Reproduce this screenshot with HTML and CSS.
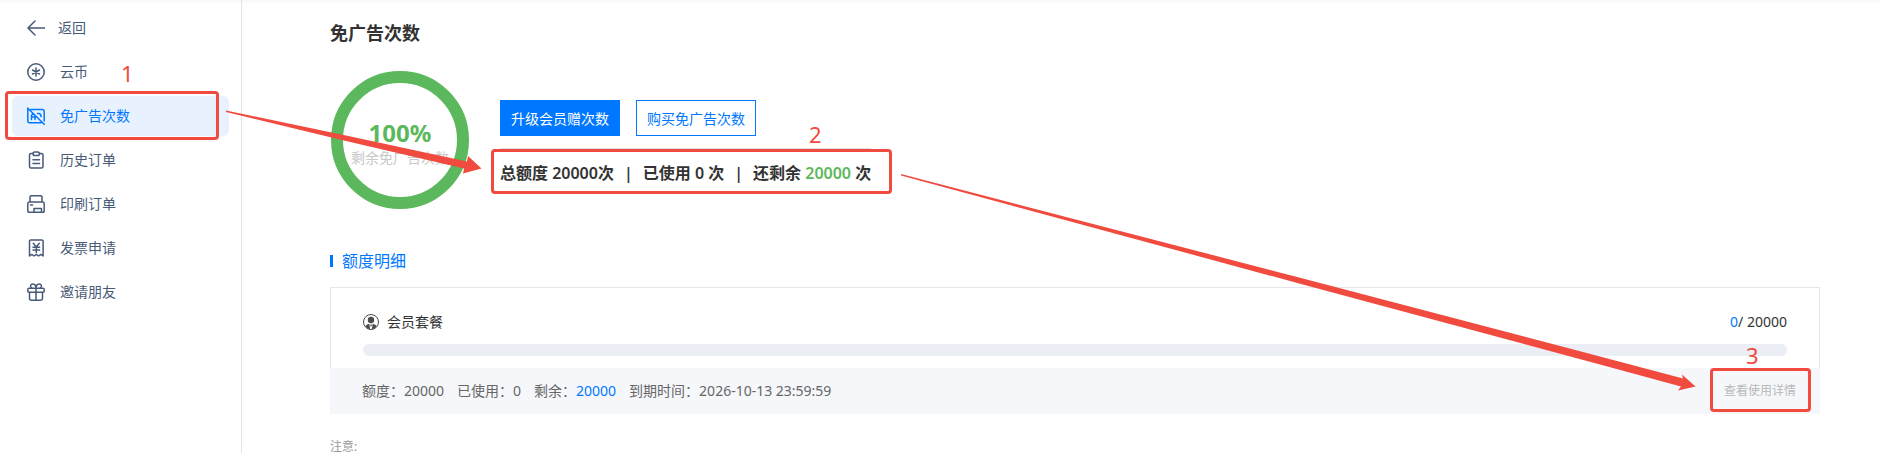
FILE: index.html
```html
<!DOCTYPE html>
<html lang="zh-CN">
<head>
  <meta charset="UTF-8">
  <meta name="viewport" content="width=device-width, initial-scale=1.0">
  <title>免广告次数</title>
  <link rel="stylesheet" href="styles.css">
</head>
<body>
  <div class="layout">
    <!-- 侧边导航 -->
    <nav class="sidebar">
      <a class="nav-item back" href="#">
        <svg class="icon" viewBox="0 0 18 18"><path d="M18 9H1M8 2L1 9l7 7"/></svg>
        返回
      </a>
      <a class="nav-item" href="#">
        <svg class="icon" viewBox="0 0 18 18"><circle cx="9" cy="9" r="8.2"/><path d="M9 5v8M5.500 7l7 4M12.500 7l-7 4"/></svg>
        云币
        <span class="mark mark-1">1</span>
      </a>
      <a class="nav-item active" href="#">
        <svg class="icon" viewBox="0 0 18 18"><path d="M4 2.500h11.500a1.700 1.700 0 0 1 1.700 1.700V14M14 15.800H2.500A1.700 1.700 0 0 1 .8 14V2M.5 1l17 16.500M4.500 12.500V8.500l1.500-2M4.500 10h3M8 9v3.500M10.500 6.500h1.200a2.500 2.500 0 0 1 2.300 3"/></svg>
        免广告次数
        <span class="frame frame-nav"></span>
      </a>
      <a class="nav-item" href="#">
        <svg class="icon" viewBox="0 0 18 18"><path d="M6 2.500H4A1.500 1.500 0 0 0 2.500 4v11.500A1.500 1.500 0 0 0 4 17h10.500a1.500 1.500 0 0 0 1.500-1.500V4a1.500 1.500 0 0 0-1.500-1.500h-2M6 8.700h6.500M6 12.500h6.500"/><rect x="6" y="1" width="6.500" height="3.600" rx="1.800"/></svg>
        历史订单
      </a>
      <a class="nav-item" href="#">
        <svg class="icon" viewBox="0 0 18 18"><path d="M3 7V2a1.200 1.200 0 0 1 1.200-1.200h9.600A1.200 1.200 0 0 1 15 2v5M7 17.200H2A1.200 1.200 0 0 1 .8 16V8.500A1.500 1.500 0 0 1 2.300 7h13.400a1.500 1.500 0 0 1 1.500 1.500V16a1.200 1.200 0 0 1-1.200 1.200H7v-3.800h7.500v3.800M3.500 10h2"/></svg>
        印刷订单
      </a>
      <a class="nav-item" href="#">
        <svg class="icon" viewBox="0 0 18 18"><path d="M2.500 17V2.200A1.300 1.300 0 0 1 3.800.9h11a1.300 1.300 0 0 1 1.300 1.300V17l-2.300-1.600-2.200 1.600-2.300-1.600L7 17l-2.200-1.600zM6.300 4.300l3 3.700 3-3.700M9.300 8v5.500M6 8.300h6.600M6 10.900h6.600"/></svg>
        发票申请
      </a>
      <a class="nav-item" href="#">
        <svg class="icon" viewBox="0 0 18 18"><path d="M2.500 9.500v6a1.700 1.700 0 0 0 1.700 1.700h9.600a1.700 1.700 0 0 0 1.700-1.700v-6M9 5.500v11.500"/><rect x=".8" y="5.300" width="16.400" height="3.900" rx="1.300"/><path d="M4.500 5C2.500 3 4 .8 5.800.9 8 1 9 3 9 5.200 9 3 10 1 12.200.9c1.800-.1 3.300 2.100 1.300 4.100"/></svg>
        邀请朋友
      </a>
    </nav>

    <main class="content">
      <h1>免广告次数</h1>

      <section class="overview">
        <div class="ring">
          <strong>100%</strong>
          <span>剩余免广告次数</span>
        </div>
        <div class="summary">
          <div class="actions">
            <button type="button" class="btn btn-primary">升级会员赠次数</button>
            <button type="button" class="btn">购买免广告次数</button>
          </div>
          <div class="stats">
            <span>总额度 20000次</span>
            <span>|</span>
            <span>已使用 0 次</span>
            <span>|</span>
            <span>还剩余 <em>20000</em> 次</span>
            <span class="frame frame-stats"></span>
            <span class="mark mark-2">2</span>
          </div>
        </div>
      </section>

      <h2>额度明细</h2>

      <section class="card">
        <div class="card-body">
          <div class="card-head">
            <svg class="user-icon" viewBox="0 0 16 16">
              <circle cx="8" cy="8" r="7.500" fill="none" stroke="#4a4a4a"/>
              <circle cx="8" cy="6" r="3.200" fill="#4a4a4a"/>
              <path d="M2.300 12.300Q3.800 10 6.300 9.800L7.200 15.400Q4.200 15 2.300 12.300zM13.700 12.300Q12.200 10 9.700 9.800L8.800 15.400Q11.800 15 13.700 12.300zM7.200 10.500h1.600l-.3 2h-1z" fill="#4a4a4a"/>
            </svg>
            <label for="usage">会员套餐</label>
            <span class="count"><em>0</em>/ 20000</span>
          </div>
          <progress id="usage" value="0" max="20000"></progress>
        </div>
        <div class="card-foot">
          <span>额度：20000</span>
          <span>已使用：0</span>
          <span>剩余：<em>20000</em></span>
          <span>到期时间：2026-10-13 23:59:59</span>
          <a class="detail-link" href="#">
            查看使用详情
            <span class="frame frame-detail"></span>
            <span class="mark mark-3">3</span>
          </a>
        </div>
      </section>

      <p class="note">注意:</p>
    </main>

    <!-- 步骤箭头 -->
    <svg class="arrow arrow-1" viewBox="0 0 256 64" preserveAspectRatio="none">
      <path d="M0 .5V2L120 31 238 58.500 237 63.500 255.500 58.500 242 46 241 51.500 120 25.500z"/>
    </svg>
    <svg class="arrow arrow-2" viewBox="0 0 795 218" preserveAspectRatio="none">
      <path d="M0 0V1.500L400 110 699 190.500 780 212.500 777 216.500 794.500 212.500 781 200.500 782 204.500 699 182.500 400 104z"/>
    </svg>
  </div>
</body>
</html>
```
FILE: styles.css
```css
* {
  box-sizing: border-box;
}
body {
  margin: 0;
  font-family: "Noto Sans", "Noto Sans CJK SC", sans-serif;
  font-size: 14px;
  line-height: 20px;
  color: #333;
  background-color: #fff;
}
a {
  text-decoration: none;
}
em {
  font-style: normal;
  color: #0077ff;
}
.layout {
  position: relative;
  display: flex;
  min-height: 100vh;
  overflow: hidden;
  background: linear-gradient(#f8f8f8, #fff 5px);
}

/* 侧边导航 */
.sidebar {
  flex: none;
  width: 242px;
  padding: 8px 12px;
  border-right: 1px solid #e3e3e3;
}
.nav-item {
  position: relative;
  display: flex;
  align-items: center;
  gap: 15px;
  height: 40px;
  margin-bottom: 4px;
  padding-left: 15px;
  border-radius: 6px;
  color: #475a78;
}
.nav-item.back {
  gap: 13px;
}
.nav-item.active {
  color: #0077ff;
  background-color: #e8f2ff;
}
.icon {
  width: 18px;
  height: 18px;
  fill: none;
  stroke: currentColor;
  stroke-width: 1.5;
  stroke-linecap: round;
  stroke-linejoin: round;
}

/* 主内容 */
.content {
  flex: 1;
  padding: 20px 61px 0 88px;
}
h1 {
  margin: 0;
  font-size: 18px;
  line-height: 26px;
}
.overview {
  display: flex;
  gap: 31px;
  margin-top: 25px;
  padding-left: 1px;
}
.ring {
  display: flex;
  flex-direction: column;
  align-items: center;
  justify-content: center;
  width: 138px;
  height: 138px;
  padding-top: 4px;
  border: 12px solid #5cb85c;
  border-radius: 50%;
}
.ring strong {
  font-size: 24px;
  line-height: 32px;
  color: #5cb85c;
}
.ring span {
  line-height: 18px;
  color: #c8c8c8;
  white-space: nowrap;
}
.summary {
  padding-top: 29px;
}
.actions {
  display: flex;
  gap: 16px;
}
.btn {
  width: 120px;
  height: 36px;
  padding: 0;
  border: 1px solid #0077ff;
  font-family: inherit;
  font-size: 14px;
  color: #0077ff;
  background-color: #fff;
  cursor: pointer;
}
.btn-primary {
  color: #fff;
  background-color: #0077ff;
}
.stats {
  position: relative;
  display: flex;
  gap: 10px;
  margin-top: 12px;
  padding-top: 12px;
  border-top: 1px solid #dcdfe6;
  font-size: 16px;
  font-weight: 600;
  line-height: 24px;
}
.stats em {
  color: #5cb85c;
}
h2 {
  display: flex;
  align-items: center;
  gap: 9px;
  margin: 40px 0 14px;
  font-size: 16px;
  font-weight: 400;
  line-height: 24px;
  color: #0077ff;
}
h2::before {
  content: "";
  width: 3px;
  height: 12px;
  background-color: #0077ff;
}

/* 额度卡片 */
.card-body {
  padding: 24px 32px 12px;
  border: 1px solid #e4e6ea;
  border-bottom: none;
}
.card-head {
  display: flex;
  align-items: center;
  gap: 8px;
}
.user-icon {
  width: 16px;
  height: 16px;
}
.count {
  margin-left: auto;
}
progress {
  display: block;
  width: 100%;
  height: 12px;
  margin-top: 12px;
  border: none;
  border-radius: 6px;
  overflow: hidden;
  appearance: none;
  background-color: #ebeef5;
}
progress::-webkit-progress-bar {
  background-color: #ebeef5;
}
progress::-webkit-progress-value {
  background-color: #0077ff;
}
.card-foot {
  display: flex;
  align-items: center;
  gap: 13px;
  height: 46px;
  padding: 0 24px 0 32px;
  color: #666;
  background-color: #f5f7fb;
}
.detail-link {
  position: relative;
  margin-left: auto;
  font-size: 12px;
  color: #b8b8b8;
}
.note {
  margin: 23px 0 0;
  font-size: 12px;
  color: #999;
}

/* 步骤标注 */
.frame {
  position: absolute;
  border: 3px solid #f04b3e;
  border-radius: 4px;
}
.frame-nav {
  inset: -5px 10px -4px -7px;
}
.frame-stats {
  inset: 0 -21px -9px -9px;
}
.frame-detail {
  inset: -13px -15px -11px -14px;
}
.mark {
  position: absolute;
  font-size: 22px;
  font-weight: 400;
  line-height: 24px;
  color: #f04b3e;
}
.mark-1 {
  left: 109px;
  top: 9px;
}
.mark-2 {
  left: 309px;
  top: -27px;
}
.mark-3 {
  left: 22px;
  top: -38px;
}
.arrow {
  position: absolute;
  fill: #f04b3e;
  pointer-events: none;
}
.arrow-1 {
  left: 226px;
  top: 110px;
  width: 256px;
  height: 64px;
}
.arrow-2 {
  left: 901px;
  top: 174px;
  width: calc(100% - 1086px);
  height: 218px;
}
```
